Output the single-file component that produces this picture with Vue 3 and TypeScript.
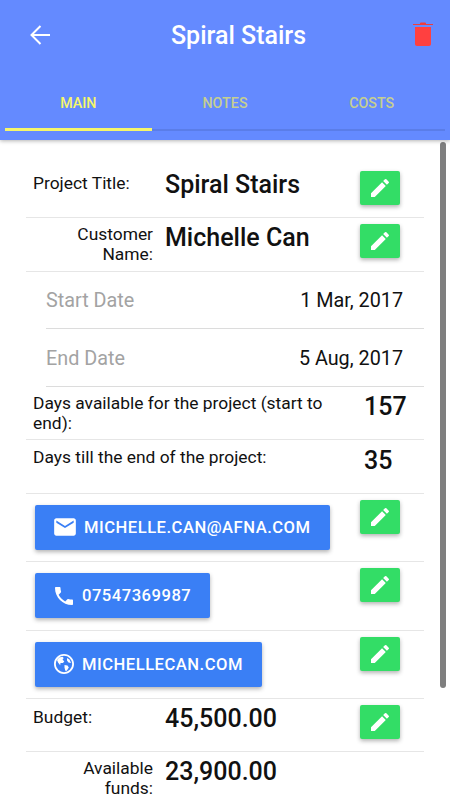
<script setup lang="ts">
interface Contact {
  kind: 'mail' | 'phone' | 'web';
  text: string;
}

const tabs = ['Main', 'Notes', 'Costs'];

const contacts: Contact[] = [
  { kind: 'mail', text: 'michelle.can@afna.com' },
  { kind: 'phone', text: '07547369987' },
  { kind: 'web', text: 'michellecan.com' },
];

const pencil = 'M3 17.25V21h3.75L17.81 9.94l-3.75-3.75L3 17.25zM20.71 7.04a1 1 0 0 0 0-1.41l-2.34-2.34a1 1 0 0 0-1.41 0l-1.83 1.83 3.75 3.75 1.83-1.83z';
</script>

<template>
  <div class="screen">
    <header class="top">
      <div class="bar">
        <svg class="back" viewBox="0 0 20 20" width="20" height="20">
          <path d="M20 10H2M10.500 1L1.500 10l9 9" fill="none" stroke="#fff" stroke-width="2" />
        </svg>
        <h1 class="title">Spiral Stairs</h1>
        <svg class="trash" viewBox="0 0 20 24" width="20" height="24">
          <path d="M7 1.500c0-.8.6-1 1.200-1h3.600c.6 0 1.200.2 1.200 1V2h7v1H0V2h7z" fill="#f03c3c" />
          <path d="M2 5h16v17c0 1.200-.9 2-2 2H4c-1.100 0-2-.8-2-2z" fill="#ff4040" />
        </svg>
      </div>
      <nav class="tabs">
        <div v-for="(tab, i) in tabs" :key="tab" class="tab" :class="{ active: i === 0 }">{{ tab }}</div>
      </nav>
    </header>

    <main class="content">
      <div class="scrollbar"></div>

      <div class="row">
        <div class="label left">Project Title:</div>
        <div class="value">Spiral Stairs</div>
        <button class="edit"><svg viewBox="0 0 24 24" width="24" height="24"><path :d="pencil" /></svg></button>
      </div>
      <div class="row">
        <div class="label">Customer Name:</div>
        <div class="value">Michelle Can</div>
        <button class="edit"><svg viewBox="0 0 24 24" width="24" height="24"><path :d="pencil" /></svg></button>
      </div>

      <div class="date">
        <span class="date-name">Start Date</span>
        <span>1 Mar, 2017</span>
      </div>
      <div class="date">
        <span class="date-name">End Date</span>
        <span>5 Aug, 2017</span>
      </div>

      <div class="row days">
        <div class="days-text">Days available for the project (start to end):</div>
        <div class="days-num">157</div>
      </div>
      <div class="row days">
        <div class="days-text">Days till the end of the project:</div>
        <div class="days-num">35</div>
      </div>

      <div v-for="c in contacts" :key="c.kind" class="row contact">
        <div class="contact-cell">
          <a class="link">
            <svg v-if="c.kind === 'mail'" viewBox="0 0 24 24" width="26" height="26">
              <path d="M20 4H4c-1.100 0-2 .9-2 2v12c0 1.100.9 2 2 2h16c1.100 0 2-.9 2-2V6c0-1.100-.9-2-2-2zm0 4l-8 5-8-5V6l8 5 8-5v2z" />
            </svg>
            <svg v-else-if="c.kind === 'phone'" viewBox="0 0 24 24" width="24" height="24">
              <path d="M6.620 10.790c1.440 2.830 3.760 5.140 6.590 6.590l2.200-2.200c.27-.27.67-.36 1.020-.24 1.120.37 2.330.57 3.570.57.55 0 1 .45 1 1V20c0 .55-.45 1-1 1C10.610 21 3 13.390 3 4c0-.55.45-1 1-1h3.500c.55 0 1 .45 1 1 0 1.250.2 2.450.57 3.570.11.35.03.74-.25 1.020l-2.200 2.200z" />
            </svg>
            <svg v-else viewBox="0 0 24 24" width="24" height="24">
              <path d="M12 2C6.480 2 2 6.480 2 12s4.480 10 10 10 10-4.480 10-10S17.520 2 12 2zm0 1.800a8.200 8.200 0 1 1 0 16.400 8.200 8.200 0 0 1 0-16.400z" />
              <path d="M7 5.500l3.500-.8 1.200 1.300-1.200 1.700 1.800 1.500-1.300 1.800H8.500l-.3 2.200L6 10.500 5 8zM12.500 13l3 .5 1.300 2-2 3.300-1.500 0-.8-3.300zM15 6l2.500 1.500 1.500 3.500-2.500-.5-1.500-2z" />
            </svg>
            <span>{{ c.text }}</span>
          </a>
        </div>
        <button class="edit"><svg viewBox="0 0 24 24" width="24" height="24"><path :d="pencil" /></svg></button>
      </div>

      <div class="row budget">
        <div class="label left">Budget:</div>
        <div class="value">45,500.00</div>
        <button class="edit"><svg viewBox="0 0 24 24" width="24" height="24"><path :d="pencil" /></svg></button>
      </div>
      <div class="row">
        <div class="label">Available funds:</div>
        <div class="value">23,900.00</div>
      </div>
    </main>
  </div>
</template>

<style>
html, body {
  margin: 0;
  background: #fff;
}
</style>

<style scoped>
.screen {
  width: 450px;
  height: 800px;
  overflow: hidden;
  display: flex;
  flex-direction: column;
  font-family: Roboto, "Liberation Sans", sans-serif;
  color: #111;
}

.top {
  height: 140px;
  flex: none;
  background: #648aff;
  box-shadow: 0 1px 4px rgba(0, 0, 0, 0.3);
  position: relative;
  z-index: 1;
}
.bar {
  height: 70px;
  display: flex;
  align-items: center;
  justify-content: space-between;
  padding: 0 17px 0 30px;
}
.title {
  margin: 0 0 0 14px;
  font-size: 25px;
  font-weight: 500;
  color: #fff;
}
.trash {
  margin-top: -2px;
}

.tabs {
  display: flex;
  margin: 17px 5px 0;
  height: 42px;
  border-bottom: 2px solid #5a7de8;
}
.tab {
  flex: 1;
  box-sizing: border-box;
  height: 44px;
  text-align: center;
  font-size: 14.300px;
  font-weight: 500;
  line-height: 32px;
  text-transform: uppercase;
  color: #c6cf90;
}
.tab.active {
  color: #f6f66a;
  border-bottom: 3px solid #f6f66a;
}

.content {
  flex: 1;
  position: relative;
  padding: 25px 26px 0;
}
.scrollbar {
  position: absolute;
  top: 2px;
  left: 440px;
  width: 6px;
  height: 546px;
  border-radius: 3px;
  background: #7f7f7f;
}

.row {
  box-sizing: border-box;
  display: flex;
  align-items: flex-start;
  height: 53.300px;
  padding-top: 6px;
  border-bottom: 1px solid #e6e6e6;
}
.label {
  box-sizing: border-box;
  width: 127px;
  padding-left: 12px;
  flex: none;
  text-align: right;
  font-size: 17.400px;
  line-height: 20px;
}
.label.left {
  text-align: left;
  padding-left: 7px;
  padding-top: 2px;
}
.value {
  flex: 1;
  margin-left: 12px;
  font-size: 25px;
  font-weight: 500;
  line-height: 28px;
}
.edit {
  width: 40px;
  height: 34px;
  margin-right: 24px;
  flex: none;
  padding: 0;
  border: 0;
  border-radius: 2px;
  background: #33dd66;
  box-shadow: 0 2px 4px rgba(0, 0, 0, 0.3);
  display: flex;
  align-items: center;
  justify-content: center;
}
.edit svg {
  fill: #fff;
}

.date {
  box-sizing: border-box;
  margin-left: 20px;
  height: 57.700px;
  padding: 2px 21px 0 0;
  display: flex;
  align-items: center;
  justify-content: space-between;
  border-bottom: 1px solid #dcdcdc;
  font-size: 19.800px;
}
.date-name {
  color: #a3a3a3;
}

.days-text {
  box-sizing: border-box;
  width: 306px;
  padding-left: 7px;
  font-size: 17.400px;
  line-height: 20px;
  flex: none;
}
.days-num {
  margin-left: 32px;
  font-size: 25px;
  font-weight: 500;
  line-height: 28px;
}
.days + .days {
  padding-top: 7px;
}

.contact {
  height: 68.600px;
}
.contact-cell {
  flex: 1;
  padding: 5px 0 0 9px;
}
.link {
  display: inline-flex;
  align-items: center;
  height: 45px;
  padding: 0 19px 0 17px;
  gap: 6px;
  border-radius: 2px;
  background: #3a7ff5;
  color: #fff;
  font-size: 16.600px;
  font-weight: 500;
  letter-spacing: 0.5px;
  text-transform: uppercase;
  box-shadow: 0 2px 4px rgba(0, 0, 0, 0.3);
}
.link svg {
  fill: #fff;
  flex: none;
}
.budget {
  height: 52.500px;
}
</style>
